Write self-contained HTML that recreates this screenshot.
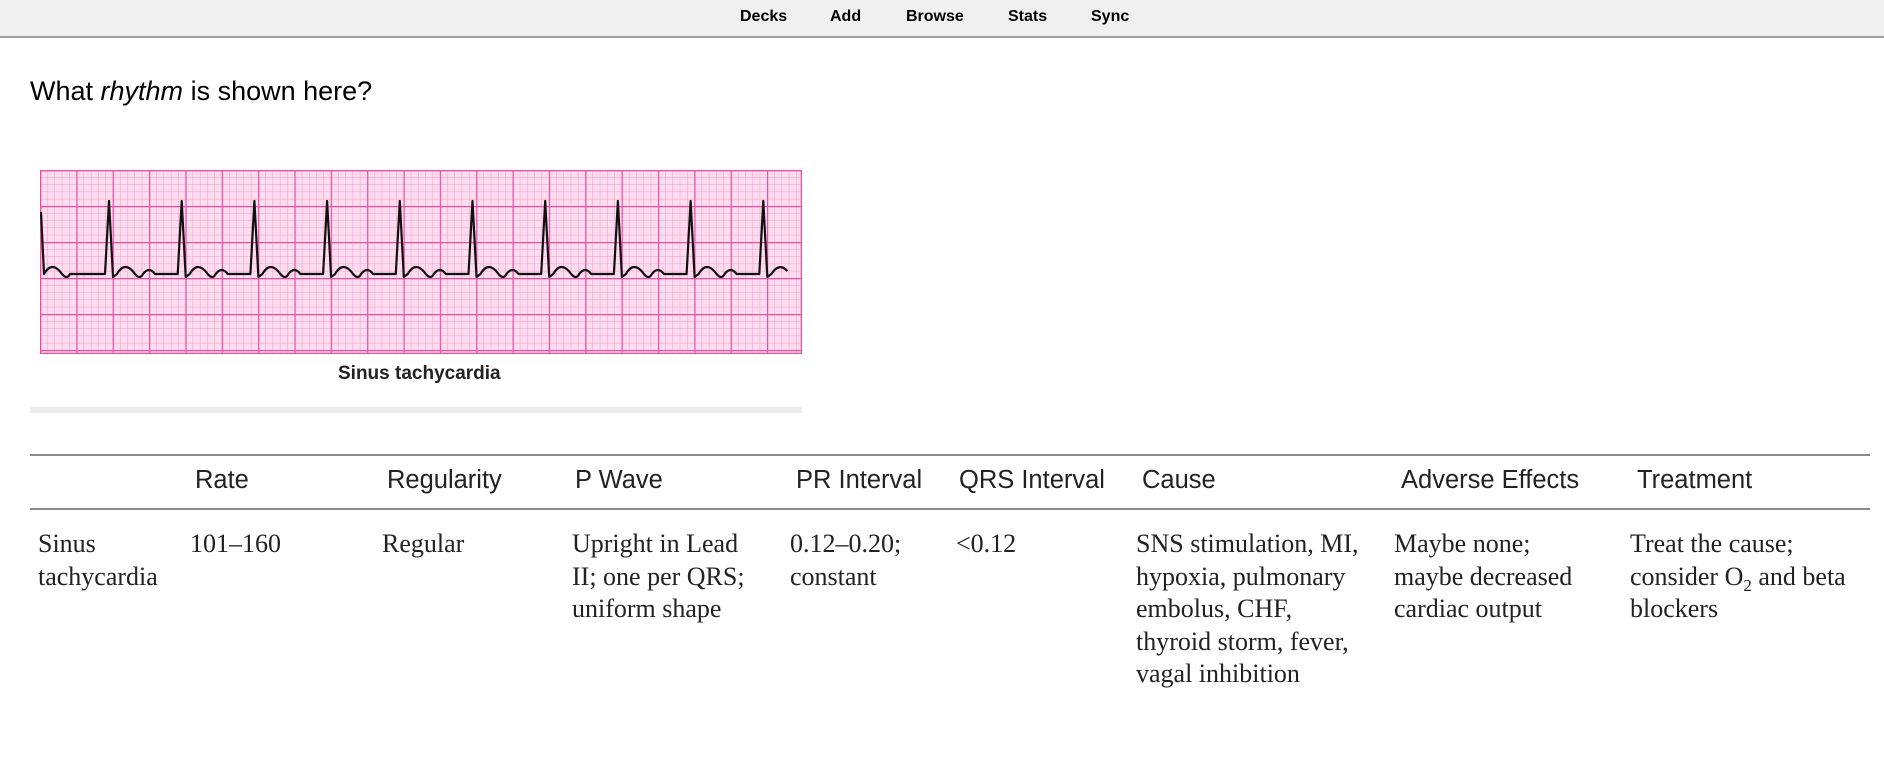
<!DOCTYPE html>
<html><head><meta charset="utf-8"><style>
body{margin:0;width:1884px;height:779px;background:#fff;position:relative;overflow:hidden;font-family:"Liberation Sans",sans-serif;}
.nav{position:absolute;left:0;top:0;width:1884px;height:36px;background:#f0f0f0;border-bottom:2px solid #a0a0a0;}
.nav span{position:absolute;top:8px;font-weight:bold;font-size:16px;color:#000;}
.a{position:absolute;white-space:nowrap;}
.h{font-size:25.5px;color:#222;line-height:28px;top:466px;}
.b{font-family:"Liberation Serif",serif;font-size:26px;line-height:32.5px;top:528px;color:#222;}
.line{position:absolute;left:30px;width:1840px;height:2px;background:#8a8a8a;}
</style></head><body>
<div class="nav">
<span style="left:740px">Decks</span>
<span style="left:830px">Add</span>
<span style="left:906px">Browse</span>
<span style="left:1008px">Stats</span>
<span style="left:1091px">Sync</span>
</div>
<div class="a" style="left:30px;top:75px;font-size:27px;line-height:32px;">What <i>rhythm</i> is shown here?</div>
<svg class="a" style="left:40px;top:170px" width="762" height="184" viewBox="0 0 762 184">
<defs>
<pattern id="s" width="7.27" height="7.2" patternUnits="userSpaceOnUse"><path d="M0 0H7.27M0 0V7.2" stroke="#f39ccb" stroke-width="1" fill="none"/></pattern>
<pattern id="g" width="36.35" height="36" patternUnits="userSpaceOnUse"><path d="M0.5 0V36M0 0.5H36.35" stroke="#ea4fa2" stroke-width="1.4" fill="none"/></pattern>
</defs>
<rect width="762" height="184" fill="#fcdcee"/>
<rect width="762" height="184" fill="url(#s)"/>
<rect width="762" height="184" fill="url(#g)"/>
<rect x="0.5" y="0.5" width="761" height="183" fill="none" stroke="#ea4fa2" stroke-width="1.5"/>
<path fill="none" stroke="#111" stroke-width="2.2" stroke-linejoin="round" d="M1 42 L4 104 q8 -14 18 0 q5 6 8 0 l35 0 l4 -73 l4 76 l4 -3 q8 -14 18 0 q5 6 8 0 q6 -8 12 0 l22.7 0 l4 -73 l4 76 l4 -3 q8 -14 18 0 q5 6 8 0 q6 -8 12 0 l22.7 0 l4 -73 l4 76 l4 -3 q8 -14 18 0 q5 6 8 0 q6 -8 12 0 l22.7 0 l4 -73 l4 76 l4 -3 q8 -14 18 0 q5 6 8 0 q6 -8 12 0 l22.7 0 l4 -73 l4 76 l4 -3 q8 -14 18 0 q5 6 8 0 q6 -8 12 0 l22.7 0 l4 -73 l4 76 l4 -3 q8 -14 18 0 q5 6 8 0 q6 -8 12 0 l22.7 0 l4 -73 l4 76 l4 -3 q8 -14 18 0 q5 6 8 0 q6 -8 12 0 l22.7 0 l4 -73 l4 76 l4 -3 q8 -14 18 0 q5 6 8 0 q6 -8 12 0 l22.7 0 l4 -73 l4 76 l4 -3 q8 -14 18 0 q5 6 8 0 q6 -8 12 0 l22.7 0 l4 -73 l4 76 l4 -3 q8 -12 16 -3"/>
</svg>
<div class="a" style="left:338px;top:363px;font-size:19px;font-weight:bold;color:#222;">Sinus tachycardia</div>
<div class="a" style="left:30px;top:407px;width:772px;height:6px;background:#eceeee;"></div>
<div class="line" style="top:454px"></div>
<div class="line" style="top:508px"></div>
<div class="a h" style="left:195px">Rate</div>
<div class="a h" style="left:387px">Regularity</div>
<div class="a h" style="left:575px">P Wave</div>
<div class="a h" style="left:796px">PR Interval</div>
<div class="a h" style="left:959px">QRS Interval</div>
<div class="a h" style="left:1142px">Cause</div>
<div class="a h" style="left:1401px">Adverse Effects</div>
<div class="a h" style="left:1637px">Treatment</div>
<div class="a b" style="left:38px">Sinus<br>tachycardia</div>
<div class="a b" style="left:190px">101–160</div>
<div class="a b" style="left:382px">Regular</div>
<div class="a b" style="left:572px">Upright in Lead<br>II; one per QRS;<br>uniform shape</div>
<div class="a b" style="left:790px">0.12–0.20;<br>constant</div>
<div class="a b" style="left:956px">&lt;0.12</div>
<div class="a b" style="left:1136px">SNS stimulation, MI,<br>hypoxia, pulmonary<br>embolus, CHF,<br>thyroid storm, fever,<br>vagal inhibition</div>
<div class="a b" style="left:1394px">Maybe none;<br>maybe decreased<br>cardiac output</div>
<div class="a b" style="left:1630px">Treat the cause;<br>consider O<sub style="font-size:17px;line-height:0">2</sub> and beta<br>blockers</div>
</body></html>
